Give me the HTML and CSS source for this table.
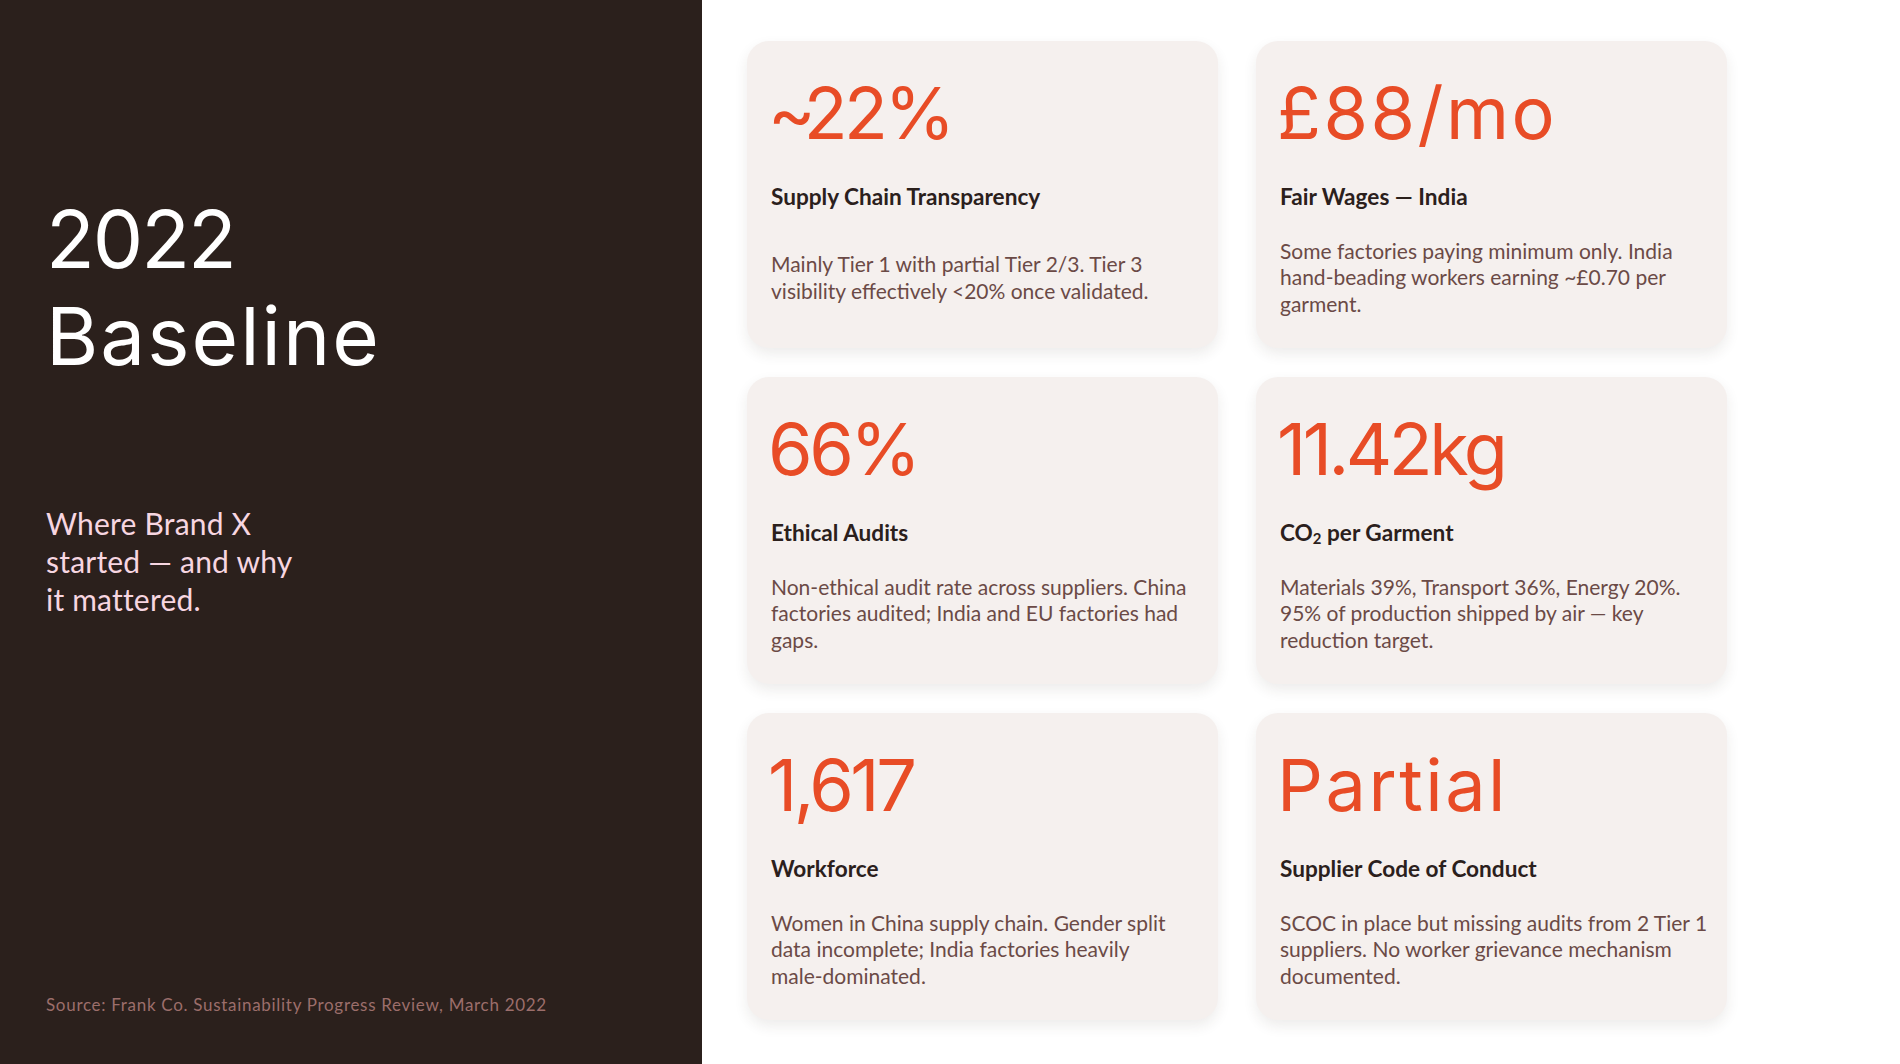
FILE: index.html
```html
<!DOCTYPE html>
<html lang="en">
<head>
<meta charset="utf-8">
<title>2022 Baseline</title>
<link rel="stylesheet" href="styles.css">
</head>
<body>
<div class="slide">
  <aside class="intro">
    <h1 class="title"><span class="year">2022</span><br><span class="word">Baseline</span></h1>
    <p class="subtitle">Where Brand X<br>started — and why<br>it mattered.</p>
    <p class="source">Source: Frank Co. Sustainability Progress Review, March 2022</p>
  </aside>
  <main class="grid">
    <section class="card">
      <div class="value"><span class="approx">~</span>22%</div>
      <h2 class="label">Supply Chain Transparency</h2>
      <div class="desc"><p>Mainly Tier 1 with partial Tier 2/3. Tier 3<br>visibility effectively &lt;20% once validated.</p></div>
    </section>
    <section class="card">
      <div class="value value-text">£88/mo</div>
      <h2 class="label">Fair Wages — India</h2>
      <div class="desc"><p>Some factories paying minimum only. India<br>hand-beading workers earning ~£0.70 per<br>garment.</p></div>
    </section>
    <section class="card">
      <div class="value">66%</div>
      <h2 class="label">Ethical Audits</h2>
      <div class="desc"><p>Non-ethical audit rate across suppliers. China<br>factories audited; India and EU factories had<br>gaps.</p></div>
    </section>
    <section class="card">
      <div class="value">11.42kg</div>
      <h2 class="label">CO<span class="sub">2</span> per Garment</h2>
      <div class="desc"><p>Materials 39%, Transport 36%, Energy 20%.<br>95% of production shipped by air — key<br>reduction target.</p></div>
    </section>
    <section class="card">
      <div class="value">1,617</div>
      <h2 class="label">Workforce</h2>
      <div class="desc"><p>Women in China supply chain. Gender split<br>data incomplete; India factories heavily<br>male-dominated.</p></div>
    </section>
    <section class="card">
      <div class="value value-text">Partial</div>
      <h2 class="label">Supplier Code of Conduct</h2>
      <div class="desc"><p>SCOC in place but missing audits from 2 Tier 1<br>suppliers. No worker grievance mechanism<br>documented.</p></div>
    </section>
  </main>
</div>
</body>
</html>
```
FILE: styles.css
```css
* { box-sizing: border-box; }
html, body { margin: 0; padding: 0; }
body {
  width: 1900px;
  height: 1064px;
  overflow: hidden;
  background: #ffffff;
  font-family: "Lato", "Liberation Sans", sans-serif;
}
.slide {
  display: flex;
  width: 1900px;
  height: 1064px;
}
.intro {
  width: 702px;
  flex: none;
  background: #2b201c;
  display: flex;
  flex-direction: column;
  padding: 190px 0 49px 46px;
}
.title {
  margin: 0;
  font-family: "Inter", "Liberation Sans", sans-serif;
  font-weight: 400;
  font-size: 80px;
  line-height: 97px;
  color: #ffffff;
}
.title .year { letter-spacing: -2px; }
.title .word { letter-spacing: 2px; }
.subtitle {
  margin: 120px 0 0;
  font-size: 30px;
  line-height: 38px;
  letter-spacing: 0.2px;
  color: #f7d6e1;
}
.source {
  margin: auto 0 0;
  font-size: 17px;
  line-height: 20px;
  letter-spacing: 0.7px;
  color: #9c6e6b;
}
.grid {
  flex: 1;
  display: grid;
  grid-template-columns: 471px 471px;
  grid-template-rows: 307px 307px 307px;
  column-gap: 38px;
  row-gap: 29px;
  padding: 41px 0 0 45px;
  align-content: start;
}
.card {
  background: #f5f0ee;
  border-radius: 22px;
  box-shadow: 0 6px 14px rgba(60, 40, 30, 0.09);
  padding: 36px 10px 24px 24px;
  display: flex;
  flex-direction: column;
}
.value {
  margin-left: -3px;
  font-family: "Inter", "Liberation Sans", sans-serif;
  font-weight: 400;
  font-size: 72px;
  line-height: 72px;
  letter-spacing: -3.5px;
  color: #e84c26;
}
.value .approx { letter-spacing: -12px; }
.value-text { letter-spacing: 2.5px; }
.label {
  margin: 34px 0 20px;
  font-size: 22.6px;
  line-height: 28px;
  font-weight: 700;
  color: #2b201c;
}
.sub {
  font-size: 0.66em;
  vertical-align: -0.2em;
  line-height: 0;
}
.desc {
  flex: 1;
  display: flex;
  align-items: center;
}
.desc p {
  margin: 0;
  font-size: 21px;
  line-height: 26.6px;
  color: #6b4a46;
  white-space: nowrap;
}
```
